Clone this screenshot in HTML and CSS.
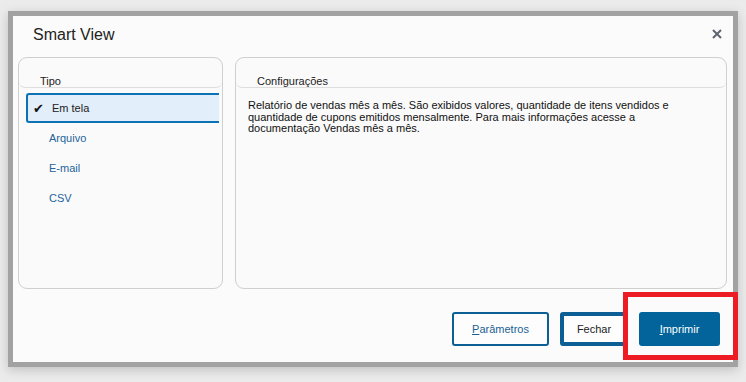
FILE: index.html
```html
<!DOCTYPE html>
<html lang="pt-BR">
<head>
<meta charset="utf-8">
<title>Smart View</title>
<link rel="stylesheet" href="styles.css">
</head>
<body>
<div class="dialog">
  <div class="title-bar">
    <span class="title">Smart View</span>
    <button class="close" aria-label="Fechar">
      <svg width="10" height="10" viewBox="0 0 10 10"><path d="M1 1 L9 9 M9 1 L1 9" stroke="#5f6470" stroke-width="2" fill="none"/></svg>
    </button>
  </div>
  <div class="panels">
    <section class="panel panel-type">
      <div class="panel-head">Tipo</div>
      <ul class="type-list">
        <li class="item selected"><span class="check">✔</span>Em tela</li>
        <li class="item">Arquivo</li>
        <li class="item">E-mail</li>
        <li class="item">CSV</li>
      </ul>
    </section>
    <section class="panel panel-config">
      <div class="panel-head">Configurações</div>
      <p class="desc">Relatório de vendas mês a mês. São exibidos valores, quantidade de itens vendidos e quantidade de cupons emitidos mensalmente. Para mais informações acesse a documentação Vendas mês a mês.</p>
    </section>
  </div>
  <div class="footer">
    <button class="btn btn-outline"><u>P</u>arâmetros</button>
    <button class="btn btn-focus">Fechar</button>
    <button class="btn btn-primary"><u>I</u>mprimir</button>
  </div>
</div>
<div class="highlight"></div>
</body>
</html>
```
FILE: styles.css
```css
html, body {
  margin: 0;
  padding: 0;
}
body {
  width: 746px;
  height: 382px;
  overflow: hidden;
  background: #ebebeb;
  font-family: "Liberation Sans", Arial, sans-serif;
  color: #222;
}
.dialog {
  margin: 11px 0 0 8px;
  width: 730px;
  height: 356px;
  box-sizing: border-box;
  border: 5px solid #a2a2a2;
  background: #fbfbfb;
  box-shadow: 0 3px 10px rgba(0, 0, 0, 0.18);
  display: flex;
  flex-direction: column;
}
.title-bar {
  display: flex;
  justify-content: space-between;
  align-items: flex-start;
  padding: 10px 11px 0 20px;
}
.title {
  font-size: 16px;
  line-height: 18px;
  color: #222;
}
.close {
  margin-top: 3px;
  padding: 0;
  border: 0;
  background: none;
  width: 10px;
  height: 10px;
  display: block;
}
.close svg {
  display: block;
}
.panels {
  display: flex;
  gap: 12px;
  padding: 0 6px 0 5px;
  margin-top: 13px;
  height: 232px;
}
.panel {
  box-sizing: border-box;
  border: 1px solid #cfcfcf;
  border-radius: 9px;
  background: #fafafa;
  overflow: hidden;
}
.panel-type {
  width: 205px;
  flex: none;
}
.panel-config {
  flex: 1;
}
.panel-head {
  box-sizing: border-box;
  height: 30px;
  padding: 17px 0 0 21px;
  font-size: 11px;
  line-height: 13px;
  color: #222;
  border-bottom: 1px solid #dedede;
  border-radius: 0 0 6px 6px;
}
.type-list {
  list-style: none;
  margin: 5px 3px 0 7px;
  padding: 0;
}
.item {
  box-sizing: border-box;
  height: 30px;
  display: flex;
  align-items: center;
  padding-left: 23px;
  font-size: 11px;
  color: #24649b;
}
.item.selected {
  border: 2px solid #0a72b5;
  border-right: none;
  border-radius: 3px 0 0 3px;
  background: #e2eef9;
  padding-left: 5px;
  color: #222;
}
.check {
  font-family: "DejaVu Sans", sans-serif;
  font-size: 13px;
  line-height: 13px;
  width: 12px;
  margin-right: 7px;
  color: #111;
}
.desc {
  margin: 12px 0 0 12px;
  max-width: 440px;
  font-size: 11px;
  line-height: 11.5px;
  color: #111;
}
.footer {
  display: flex;
  justify-content: flex-end;
  gap: 11px;
  margin-top: 23px;
  padding-right: 13px;
}
.btn {
  box-sizing: border-box;
  height: 34px;
  border-radius: 3px;
  font-family: "Liberation Sans", Arial, sans-serif;
  font-size: 11px;
  padding: 0;
  cursor: pointer;
}
.btn-outline {
  width: 97px;
  border: 2px solid #0b5f94;
  background: #fdfdfd;
  color: #1b5f94;
}
.btn-focus {
  width: 68px;
  border: 4px solid #0b5f94;
  background: #fdfdfd;
  color: #222;
}
.btn-primary {
  width: 81px;
  border: none;
  background: #03649b;
  color: #fff;
}
.highlight {
  position: absolute;
  left: 623px;
  top: 292px;
  width: 115px;
  height: 68px;
  box-sizing: border-box;
  border: 5px solid #ed1c24;
}
```
